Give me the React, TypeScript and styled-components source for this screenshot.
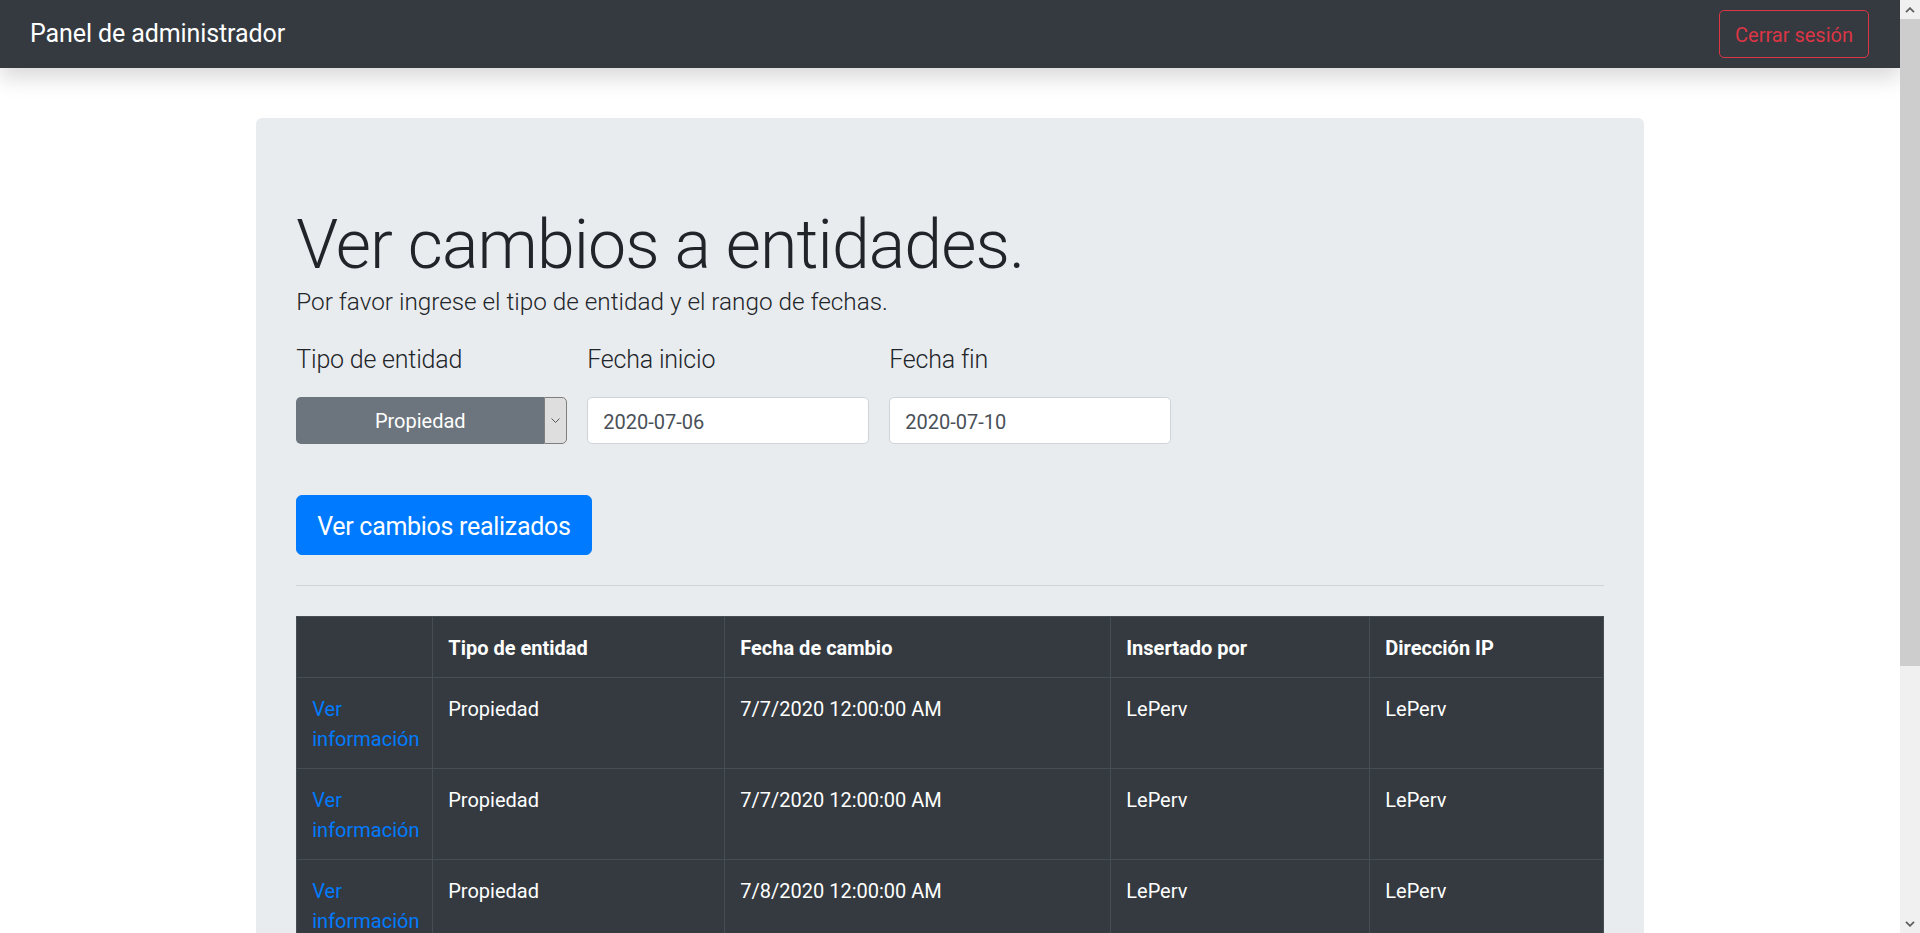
import React from "react";
import styled, { createGlobalStyle } from "styled-components";

const GlobalStyle = createGlobalStyle`
  html, body {
    margin: 0;
    height: 100%;
    overflow: hidden;
  }
  body {
    background: #fff;
    color: #212529;
    font-family: Roboto, "Open Sans", "Liberation Sans", sans-serif;
  }
  #root {
    height: 100%;
  }
`;

const Shell = styled.div`
  display: flex;
  height: 100vh;
`;

const Page = styled.div`
  flex: 1;
  min-width: 0;
  overflow: hidden;
`;

const ScrollRail = styled.div`
  width: 20px;
  flex-shrink: 0;
  display: flex;
  flex-direction: column;
  background: #f0f0f0;
`;

const RailButton = styled.div`
  height: 19px;
  display: flex;
  align-items: center;
  justify-content: center;
  color: #606060;
`;

const RailTrack = styled.div`
  flex: 1;
`;

const RailThumb = styled.div`
  height: 647px;
  background: #cdcdcd;
`;

const Navbar = styled.nav`
  position: relative;
  z-index: 1;
  height: 68px;
  display: flex;
  align-items: center;
  justify-content: space-between;
  padding: 0 31px 0 30px;
  background: #343a40;
  box-shadow: 0 10px 20px rgba(0, 0, 0, 0.15);
`;

const Brand = styled.span`
  color: #fff;
  font-size: 25px;
  line-height: 1.5;
  letter-spacing: -0.1px;
`;

const LogoutButton = styled.button`
  height: 47.5px;
  padding: 1px 15px 0;
  border: 1px solid #dc3545;
  border-radius: 5px;
  background: transparent;
  color: #dc3545;
  font-family: inherit;
  font-size: 20px;
  line-height: 1.5;
`;

const Container = styled.main`
  width: 1425px;
  box-sizing: border-box;
  padding: 0 18.75px;
  margin: 50px auto 0;
`;

const Jumbotron = styled.section`
  background: #e9ecef;
  border-radius: 6px;
  padding: 80px 40px;
  margin-bottom: 40px;
`;

const Title = styled.h1`
  margin: 0;
  padding-top: 11px;
  font-size: 68px;
  font-weight: 300;
  line-height: 73px;
  letter-spacing: -0.9px;
`;

const Lead = styled.p`
  margin: 0;
  padding-top: 2px;
  font-size: 24.3px;
  font-weight: 300;
  line-height: 35.5px;
`;

const Fields = styled.div`
  display: grid;
  grid-template-columns: 271px 282px 282px;
  column-gap: 20px;
  margin-top: 20px;
`;

const Field = styled.div`
  display: flex;
  flex-direction: column;
`;

const Label = styled.label`
  padding-top: 2px;
  font-size: 25px;
  font-weight: 300;
  line-height: 35.5px;
  letter-spacing: -0.2px;
  margin-bottom: 20px;
`;

const Select = styled.div`
  display: flex;
  height: 47px;
`;

const SelectValue = styled.div`
  flex: 1;
  display: flex;
  align-items: center;
  justify-content: center;
  padding-top: 1px;
  background: #6c757d;
  border-radius: 5px 0 0 5px;
  color: #fff;
  font-size: 20px;
`;

const SelectArrow = styled.div`
  width: 21px;
  display: flex;
  align-items: center;
  justify-content: center;
  background: #dedede;
  border: 1px solid #7f7f7f;
  border-radius: 0 5px 5px 0;
  color: #555;
`;

const DateInput = styled.input`
  height: 47px;
  box-sizing: border-box;
  padding: 2px 15px 0;
  border: 1px solid #ced4da;
  border-radius: 5px;
  background: #fff;
  color: #495057;
  font-family: inherit;
  font-size: 20px;
  outline: none;
`;

const PrimaryButton = styled.button`
  align-self: flex-start;
  margin-top: 51px;
  padding: 12px 20px 8px;
  border: 1px solid #007bff;
  border-radius: 6px;
  background: #007bff;
  color: #fff;
  font-family: inherit;
  font-size: 25px;
  line-height: 37.5px;
  letter-spacing: -0.3px;
`;

const Divider = styled.hr`
  margin: 30px 0;
  border: 0;
  border-top: 1px solid rgba(0, 0, 0, 0.1);
`;

const Table = styled.table`
  width: 100%;
  table-layout: fixed;
  border-collapse: collapse;
  background: #343a40;
  color: #fff;
  font-size: 20px;
  line-height: 30px;
`;

const Col = styled.col<{ $w: number }>`
  width: ${(p) => p.$w}px;
`;

const Th = styled.th`
  padding: 16px 15px 14px;
  border: 1px solid #454d55;
  text-align: left;
  vertical-align: top;
  font-weight: 700;
`;

const Td = styled.td`
  padding: 16px 15px 14px;
  border: 1px solid #454d55;
  vertical-align: top;
`;

const InfoLink = styled.a`
  color: #007bff;
  text-decoration: none;
`;

const columns = [136, 292, 386, 259, 234];

const changes = [
  { tipo: "Propiedad", fecha: "7/7/2020 12:00:00 AM", usuario: "LePerv", ip: "LePerv" },
  { tipo: "Propiedad", fecha: "7/7/2020 12:00:00 AM", usuario: "LePerv", ip: "LePerv" },
  { tipo: "Propiedad", fecha: "7/8/2020 12:00:00 AM", usuario: "LePerv", ip: "LePerv" },
  { tipo: "Propiedad", fecha: "7/9/2020 12:00:00 AM", usuario: "LePerv", ip: "LePerv" },
];

function Chevron({ up }: { up?: boolean }) {
  return (
    <svg width="10" height="6" viewBox="0 0 10 6">
      <path
        d={up ? "M1 5.2 L5 1.2 L9 5.2" : "M1 0.8 L5 4.8 L9 0.8"}
        fill="none"
        stroke="currentColor"
        strokeWidth="1.8"
      />
    </svg>
  );
}

function App() {
  return (
    <Shell>
      <GlobalStyle />
      <Page>
        <Navbar>
          <Brand>Panel de administrador</Brand>
          <LogoutButton>Cerrar sesión</LogoutButton>
        </Navbar>
        <Container>
          <Jumbotron>
            <Title>Ver cambios a entidades.</Title>
            <Lead>Por favor ingrese el tipo de entidad y el rango de fechas.</Lead>
            <Fields>
              <Field>
                <Label>Tipo de entidad</Label>
                <Select>
                  <SelectValue>Propiedad</SelectValue>
                  <SelectArrow>
                    <svg width="9" height="5" viewBox="0 0 9 5">
                      <path d="M0.5 0.5 L4.5 4.5 L8.5 0.5" fill="none" stroke="currentColor" strokeWidth="1" />
                    </svg>
                  </SelectArrow>
                </Select>
              </Field>
              <Field>
                <Label>Fecha inicio</Label>
                <DateInput value="2020-07-06" readOnly />
              </Field>
              <Field>
                <Label>Fecha fin</Label>
                <DateInput value="2020-07-10" readOnly />
              </Field>
            </Fields>
            <Field>
              <PrimaryButton>Ver cambios realizados</PrimaryButton>
            </Field>
            <Divider />
            <Table>
              <colgroup>
                {columns.map((w, i) => (
                  <Col key={i} $w={w} />
                ))}
              </colgroup>
              <thead>
                <tr>
                  <Th />
                  <Th>Tipo de entidad</Th>
                  <Th>Fecha de cambio</Th>
                  <Th>Insertado por</Th>
                  <Th>Dirección IP</Th>
                </tr>
              </thead>
              <tbody>
                {changes.map((c, i) => (
                  <tr key={i}>
                    <Td>
                      <InfoLink href="#">Ver información</InfoLink>
                    </Td>
                    <Td>{c.tipo}</Td>
                    <Td>{c.fecha}</Td>
                    <Td>{c.usuario}</Td>
                    <Td>{c.ip}</Td>
                  </tr>
                ))}
              </tbody>
            </Table>
          </Jumbotron>
        </Container>
      </Page>
      <ScrollRail>
        <RailButton>
          <Chevron up />
        </RailButton>
        <RailTrack>
          <RailThumb />
        </RailTrack>
        <RailButton>
          <Chevron />
        </RailButton>
      </ScrollRail>
    </Shell>
  );
}

export default App;
